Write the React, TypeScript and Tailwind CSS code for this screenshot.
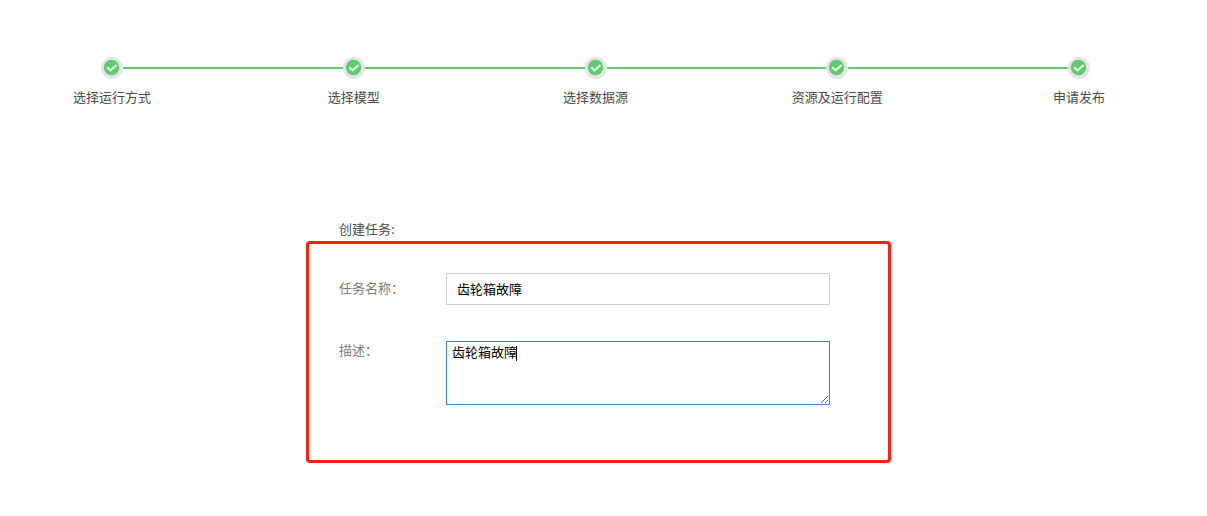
import { Fragment } from "react";

const steps = ["选择运行方式", "选择模型", "选择数据源", "资源及运行配置", "申请发布"];

function StepMark() {
  return (
    <svg className="size-[22px]" viewBox="0 0 22 22" aria-hidden="true">
      <circle cx="11" cy="11" r="11" fill="#e4e4e4" />
      <circle cx="10.5" cy="10.5" r="7.7" fill="#5fcb71" />
      <path d="M6.2 10.2l3.4 3.2 6-5.4" fill="none" stroke="#e6f8e8" strokeWidth="2.1" />
    </svg>
  );
}

function Stepper() {
  return (
    <ol className="flex items-start pl-16 pr-20">
      {steps.map((label, index) => (
        <Fragment key={label}>
          {index > 0 && (
            <li aria-hidden="true" className="mx-[-37px] mt-[10px] h-0.5 flex-1 bg-[#5fcb71]" />
          )}
          <li className="flex w-24 shrink-0 flex-col items-center gap-2">
            <StepMark />
            <span className="whitespace-nowrap text-[#4c4c4c]">{label}</span>
          </li>
        </Fragment>
      ))}
    </ol>
  );
}

export default function App() {
  return (
    <main className="min-h-screen bg-white pb-[53px] pt-[57px] font-['Noto_Sans_CJK_SC',sans-serif] text-[13px] leading-5">
      <Stepper />
      <form className="ml-[306px] mt-28 max-w-[585px]">
        <h1 className="pl-[33px] text-[#4c4c4c]">创建任务:</h1>
        <div className="mt-[2px] flex flex-col gap-9 rounded-[4px] border-3 border-[#ff1e12] px-[30px] pb-[55px] pt-[29px]">
          <div className="flex items-center">
            <label htmlFor="task-name" className="w-[107px] shrink-0 pb-0.5 text-[#7c7c7c]">
              任务名称：
            </label>
            <input
              id="task-name"
              type="text"
              defaultValue="齿轮箱故障"
              className="h-8 w-96 border border-[#cfcfcf] bg-white px-[10px] pb-0.5 text-black outline-none focus:border-[#3a85d2]"
            />
          </div>
          <div className="flex items-start">
            <label htmlFor="task-description" className="w-[107px] shrink-0 leading-[18px] text-[#7c7c7c]">
              描述：
            </label>
            <div className="relative flex w-96">
              <textarea
                id="task-description"
                defaultValue="齿轮箱故障"
                className="h-16 w-full resize border border-[#3a85d2] bg-white px-[5px] text-black outline-none"
              />
              <span aria-hidden="true" className="absolute left-[70px] top-[5px] h-[15px] w-px bg-black" />
            </div>
          </div>
        </div>
      </form>
    </main>
  );
}
